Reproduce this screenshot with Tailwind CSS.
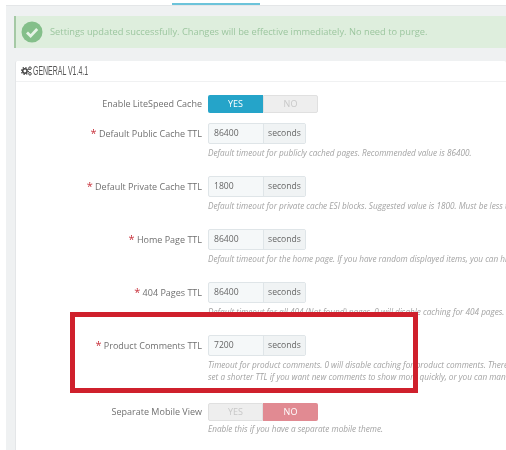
<!DOCTYPE html>
<html lang="en">
<head>
    <meta charset="UTF-8">
    <title>LiteSpeed Cache Settings</title>
    <script src="https://cdn.jsdelivr.net/npm/@tailwindcss/browser@4"></script>
</head>
<body class="bg-white font-['Open_Sans',sans-serif] overflow-hidden">
    <div class="relative w-[506px] h-[450px] overflow-hidden blur-[0.4px]">
        <!-- Page background -->
        <div class="ml-[6px] h-full bg-[#eff1f2] border-t border-[#e4e6e8] mt-[5px]">
            <!-- Active tab underline -->
            <div class="absolute left-[172px] top-[3px] w-[88px] h-[2px] bg-[#6cc3da]"></div>

            <!-- Success alert -->
            <div class="ml-[8px] mt-[10px] h-[32px] flex items-center bg-[#deeedd] border-l-2 border-[#a5c9a5] pl-[5px] w-[492px]">
                <svg class="w-[22px] h-[22px] shrink-0" viewBox="0 0 22 22">
                    <circle cx="11" cy="11" r="10.5" fill="#84bf8a"/>
                    <path d="M6 11.5l3.6 3.6L16.2 8" fill="none" stroke="#e6f3e6" stroke-width="2.8"/>
                </svg>
                <span class="ml-[7px] text-[9.3px] text-[#9cc69f] whitespace-nowrap">Settings updated successfully. Changes will be effective immediately. No need to purge.</span>
            </div>

            <!-- General panel -->
            <div class="ml-[9px] mt-[13px] w-[491px] h-[400px] bg-white rounded-t-[2px] border-l border-[#e4e6e8]">
                <div class="h-[21px] flex items-center pl-[5px] border-b border-[#f0f1f2] text-[#555]">
                    <svg class="w-[11px] h-[10px] shrink-0" viewBox="0 0 11 10">
                        <circle cx="3.9" cy="5" r="2.2" fill="none" stroke="#444" stroke-width="1.5"/>
                        <circle cx="3.9" cy="5" r="3.5" fill="none" stroke="#444" stroke-width="1.2" stroke-dasharray="1.3 1.45"/>
                        <circle cx="9" cy="2.2" r="1.3" fill="none" stroke="#444" stroke-width="1"/>
                        <circle cx="9" cy="7.8" r="1.3" fill="none" stroke="#444" stroke-width="1"/>
                    </svg>
                    <span class="ml-[1px] text-[12px] font-['Liberation_Sans',sans-serif] whitespace-nowrap origin-left scale-x-[0.58]">GENERAL V1.4.1</span>
                </div>

                <div class="pt-[13px] w-[491px] overflow-hidden">
                    <!-- Enable LiteSpeed Cache -->
                    <div class="flex h-[18px] items-center">
                        <label class="w-[186px] text-right text-[9px] text-[#707070] whitespace-nowrap">Enable LiteSpeed Cache</label>
                        <div class="ml-[6px] flex w-[110px] h-[18px] text-[9px]">
                            <span class="w-[55px] flex items-center justify-center bg-[#25a4c9] text-white rounded-l-[2px]">YES</span>
                            <span class="w-[55px] flex items-center justify-center bg-[#eeeeee] text-[#c8c8c8] border border-[#e0e0e0] rounded-r-[2px]">NO</span>
                        </div>
                    </div>

                    <!-- Default Public Cache TTL -->
                    <div class="mt-[10px] h-[43px]">
                        <div class="flex h-[21px] items-center">
                            <label class="w-[186px] text-right text-[9px] text-[#707070] whitespace-nowrap"><span class="text-[11px] leading-none text-[#c8323c]">*</span> Default Public Cache TTL</label>
                            <div class="ml-[6px] flex w-[98px] h-[21px] text-[8.6px] text-[#666] border border-[#dfe5e8] rounded-[2px] bg-[#f5f8f9]">
                                <span class="w-[54px] pl-[5px] flex items-center">86400</span>
                                <span class="flex-1 flex items-center justify-center bg-[#f0f3f4] border-l border-[#dfe5e8]">seconds</span>
                            </div>
                        </div>
                        <p class="ml-[192px] mt-[2px] text-[8.2px] leading-[14px] italic text-[#a3a3a3] whitespace-nowrap">Default timeout for publicly cached pages. Recommended value is 86400.</p>
                    </div>

                    <!-- Default Private Cache TTL -->
                    <div class="mt-[10px] h-[43px]">
                        <div class="flex h-[21px] items-center">
                            <label class="w-[186px] text-right text-[9px] text-[#707070] whitespace-nowrap"><span class="text-[11px] leading-none text-[#c8323c]">*</span> Default Private Cache TTL</label>
                            <div class="ml-[6px] flex w-[98px] h-[21px] text-[8.6px] text-[#666] border border-[#dfe5e8] rounded-[2px] bg-[#f5f8f9]">
                                <span class="w-[54px] pl-[5px] flex items-center">1800</span>
                                <span class="flex-1 flex items-center justify-center bg-[#f0f3f4] border-l border-[#dfe5e8]">seconds</span>
                            </div>
                        </div>
                        <p class="ml-[192px] mt-[2px] text-[8.2px] leading-[14px] italic text-[#a3a3a3] whitespace-nowrap">Default timeout for private cache ESI blocks. Suggested value is 1800. Must be less than the public TTL.</p>
                    </div>

                    <!-- Home Page TTL -->
                    <div class="mt-[10px] h-[43px]">
                        <div class="flex h-[21px] items-center">
                            <label class="w-[186px] text-right text-[9px] text-[#707070] whitespace-nowrap"><span class="text-[11px] leading-none text-[#c8323c]">*</span> Home Page TTL</label>
                            <div class="ml-[6px] flex w-[98px] h-[21px] text-[8.6px] text-[#666] border border-[#dfe5e8] rounded-[2px] bg-[#f5f8f9]">
                                <span class="w-[54px] pl-[5px] flex items-center">86400</span>
                                <span class="flex-1 flex items-center justify-center bg-[#f0f3f4] border-l border-[#dfe5e8]">seconds</span>
                            </div>
                        </div>
                        <p class="ml-[192px] mt-[2px] text-[8.2px] leading-[14px] italic text-[#a3a3a3] whitespace-nowrap">Default timeout for the home page. If you have random displayed items, you can hide them.</p>
                    </div>

                    <!-- 404 Pages TTL -->
                    <div class="mt-[10px] h-[43px]">
                        <div class="flex h-[21px] items-center">
                            <label class="w-[186px] text-right text-[9px] text-[#707070] whitespace-nowrap"><span class="text-[11px] leading-none text-[#c8323c]">*</span> 404 Pages TTL</label>
                            <div class="ml-[6px] flex w-[98px] h-[21px] text-[8.6px] text-[#666] border border-[#dfe5e8] rounded-[2px] bg-[#f5f8f9]">
                                <span class="w-[54px] pl-[5px] flex items-center">86400</span>
                                <span class="flex-1 flex items-center justify-center bg-[#f0f3f4] border-l border-[#dfe5e8]">seconds</span>
                            </div>
                        </div>
                        <p class="ml-[192px] mt-[2px] text-[8.2px] leading-[14px] italic text-[#a3a3a3] whitespace-nowrap">Default timeout for all 404 (Not found) pages. 0 will disable caching for 404 pages.</p>
                    </div>

                    <!-- Product Comments TTL -->
                    <div class="mt-[10px] h-[58px]">
                        <div class="flex h-[21px] items-center">
                            <label class="w-[186px] text-right text-[9px] text-[#707070] whitespace-nowrap"><span class="text-[11px] leading-none text-[#c8323c]">*</span> Product Comments TTL</label>
                            <div class="ml-[6px] flex w-[98px] h-[21px] text-[8.6px] text-[#666] border border-[#dfe5e8] rounded-[2px] bg-[#f5f8f9]">
                                <span class="w-[54px] pl-[5px] flex items-center">7200</span>
                                <span class="flex-1 flex items-center justify-center bg-[#f0f3f4] border-l border-[#dfe5e8]">seconds</span>
                            </div>
                        </div>
                        <p class="ml-[192px] mt-[3px] text-[8.2px] leading-[12px] italic text-[#a3a3a3] whitespace-nowrap">Timeout for product comments. 0 will disable caching for product comments. There are</p>
                        <p class="ml-[192px] text-[8.2px] leading-[12px] italic text-[#a3a3a3] whitespace-nowrap">set a shorter TTL if you want new comments to show more quickly, or you can manually</p>
                    </div>

                    <!-- Separate Mobile View -->
                    <div class="mt-[10px] flex h-[18px] items-center">
                        <label class="w-[186px] text-right text-[9px] text-[#707070] whitespace-nowrap">Separate Mobile View</label>
                        <div class="ml-[6px] flex w-[110px] h-[18px] text-[9px]">
                            <span class="w-[55px] flex items-center justify-center bg-[#eeeeee] text-[#c8c8c8] border border-[#e0e0e0] rounded-l-[2px]">YES</span>
                            <span class="w-[55px] flex items-center justify-center bg-[#e18a92] text-white rounded-r-[2px]">NO</span>
                        </div>
                    </div>
                    <p class="ml-[192px] mt-[1px] text-[8.2px] leading-[14px] italic text-[#a3a3a3] whitespace-nowrap">Enable this if you have a separate mobile theme.</p>
                </div>
            </div>
        </div>

        <!-- Red highlight drawn over the screenshot -->
        <div class="absolute left-[70px] top-[312px] w-[348px] h-[81px] border-[5px] border-[#cf202c]"></div>
    </div>
</body>
</html>
